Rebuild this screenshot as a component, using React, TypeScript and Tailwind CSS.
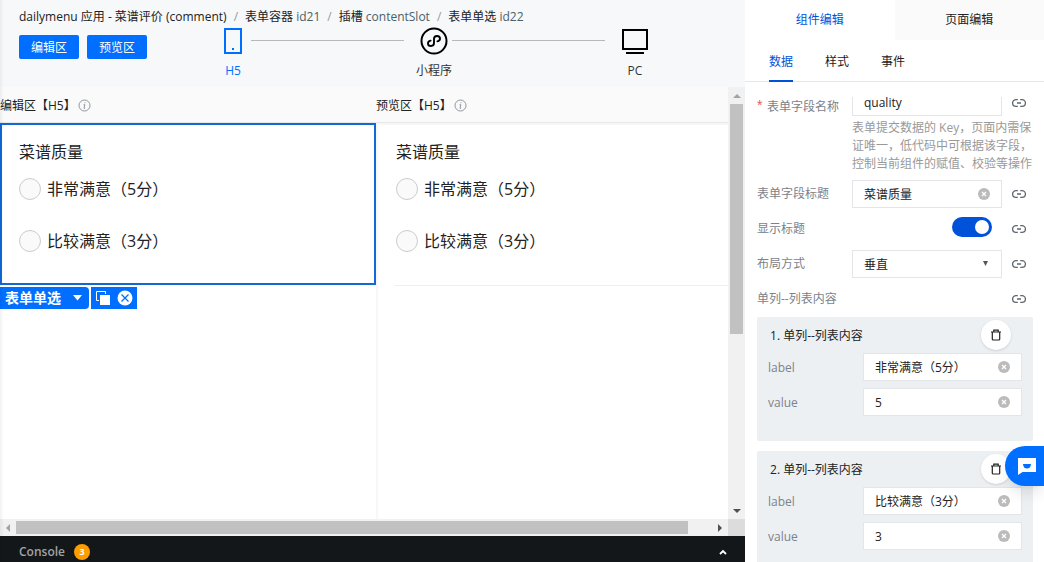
import { useState } from "react";
import type { ReactNode } from "react";

type Item = { label: string; value: string };

const crumbs = [
    { name: "表单容器", id: "id21" },
    { name: "插槽", id: "contentSlot" },
    { name: "表单单选", id: "id22" },
];

const options = ["非常满意（5分）", "比较满意（3分）"];

//icons

const PhoneIcon = () => (
    <svg width="20" height="28" viewBox="0 0 20 28" fill="none">
        <rect x="2" y="2" width="16" height="24" stroke="#006eff" strokeWidth="2" />
        <rect x="9" y="21" width="2" height="2" fill="#006eff" />
    </svg>
);

const MiniIcon = () => (
    <svg width="28" height="28" viewBox="0 0 28 28" fill="none" stroke="#000">
        <circle cx="14" cy="14" r="12.5" strokeWidth="2" />
        <path d="M10.6 13.6c-1.6.3-2.6 1.4-2.6 2.8 0 1.500 1.300 2.600 3 2.600s3-1.200 3-2.900v-4.200c0-1.700 1.300-2.900 3-2.900s3 1.100 3 2.600c0 1.400-1 2.500-2.600 2.800" strokeWidth="1.9" strokeLinecap="round" />
    </svg>
);

const PcIcon = () => (
    <svg width="28" height="28" viewBox="0 0 28 28" fill="none">
        <rect x="2" y="3" width="24" height="19" stroke="#000" strokeWidth="2" />
        <rect x="5" y="25" width="18" height="2" fill="#000" />
    </svg>
);

const InfoIcon = () => (
    <svg width="13" height="13" viewBox="0 0 13 13" fill="none" stroke="#8f959e">
        <circle cx="6.5" cy="6.5" r="5.5" />
        <path d="M5.6 5.6h1.2L6 9.3h1.1M7 3.4v.8" />
    </svg>
);

const LinkIcon = () => (
    <svg width="14" height="10" viewBox="0 0 14 10" fill="none" stroke="#5f6670" strokeWidth="1.3">
        <path d="M5.8 1.6H4a3.4 3.4 0 0 0 0 6.8h1.8M8.2 1.6H10a3.4 3.4 0 0 1 0 6.8H8.2M5 5h4" />
    </svg>
);

const TrashIcon = () => (
    <svg width="12" height="12" viewBox="0 0 12 12" fill="none" stroke="#222" strokeWidth="1.2">
        <path d="M1 3h10M3.8 3V1.1h4.4V3M2.3 3v7.2q0 .8.8.8h5.8q.8 0 .8-.8V3" />
    </svg>
);

const ClearIcon = () => (
    <svg width="12" height="12" viewBox="0 0 12 12">
        <circle cx="6" cy="6" r="6" fill="#bbb" />
        <path d="M4 4l4 4M8 4l-4 4" stroke="#fff" strokeWidth="1.3" />
    </svg>
);

const CopyIcon = () => (
    <svg width="14" height="14" viewBox="0 0 14 14" fill="none">
        <path d="M9.5 3V.5h-9v9H3" stroke="#fff" />
        <rect x="4" y="4" width="10" height="10" fill="#fff" />
    </svg>
);

const CloseIcon = () => (
    <svg width="16" height="16" viewBox="0 0 16 16">
        <circle cx="8" cy="8" r="7.5" fill="#fff" />
        <path d="M4.5 4.5l7 7M11.5 4.5l-7 7" stroke="#006eff" strokeWidth="1.2" />
    </svg>
);

const ChatIcon = () => (
    <svg width="18" height="17" viewBox="0 0 18 17">
        <path d="M0 0h18v14H4.5L0 17z" fill="#fff" />
        <path d="M5 6h8a4 4.6 0 0 1-8 0z" fill="#006eff" />
    </svg>
);

const Arrow = ({ d, color }: { d: string; color: string }) => (
    <svg width="8" height="8" viewBox="0 0 8 8">
        <path d={d} fill={color} />
    </svg>
);

//left side

const Step = ({ icon, text, active }: { icon: ReactNode; text: string; active?: boolean }) => (
    <button className="flex w-9 shrink-0 flex-col items-center">
        <span className="flex h-7 items-center justify-center">{icon}</span>
        <span className={`mt-[7px] whitespace-nowrap leading-[18px] ${active ? "text-[#006eff]" : "text-[#333]"}`}>{text}</span>
    </button>
);

const StepLine = () => <div className="mt-[13px] mr-3 h-px flex-1 bg-[#b5b8bc]" />;

const Header = () => (
    <header className="h-[87px] shrink-0 bg-[#f6f8fa] pl-[19px]">
        <nav className="flex h-[27px] items-center pt-[7px] whitespace-nowrap text-[#222]">
            <span>dailymenu 应用 - 菜谱评价 (comment)</span>
            {crumbs.map((c) => (
                <span key={c.id} className="flex">
                    <span className="mx-[7px] text-[#999]">/</span>
                    <a href="#" className="text-[#222]">
                        {c.name} <span className="text-[#4b5f66]">{c.id}</span>
                    </a>
                </span>
            ))}
        </nav>
        <div className="flex items-start pr-[92px]">
            <div className="mt-2 mr-[68px] flex gap-2 text-white">
                <button className="h-6 w-15 rounded-xs bg-[#006eff] pt-0.5">编辑区</button>
                <button className="h-6 w-15 rounded-xs bg-[#006eff] pt-0.5">预览区</button>
            </div>
            <div className="flex flex-1 items-start">
                <Step icon={<PhoneIcon />} text="H5" active />
                <StepLine />
                <Step icon={<MiniIcon />} text="小程序" />
                <StepLine />
                <Step icon={<PcIcon />} text="PC" />
            </div>
        </div>
    </header>
);

const PaneTitle = ({ text }: { text: string }) => (
    <div className="flex h-9 items-center gap-0.5 border-b border-[#e8e8e8] bg-[#fafafa] pt-0.5 text-[#222]">
        {text}
        <InfoIcon />
    </div>
);

const RadioForm = ({ name }: { name: string }) => (
    <fieldset className="pt-[15px] pb-[31px] pl-[17px] text-base text-[#222]">
        <legend className="float-left w-full leading-6">菜谱质量</legend>
        <div className="clear-both flex flex-col gap-[30px] pt-3.5">
            {options.map((o) => (
                <label key={o} className="flex h-[22px] items-center gap-1.5">
                    <input type="radio" name={name} className="size-[22px] appearance-none rounded-full border border-[#ccc] bg-[#fafafa] checked:border-[#006eff]" />
                    {o}
                </label>
            ))}
        </div>
    </fieldset>
);

const Canvas = () => (
    <div className="flex min-h-0 flex-1">
        <div className="grid min-w-0 flex-1 grid-cols-[376fr_352fr] bg-white">
            <section>
                <PaneTitle text="编辑区【H5】" />
                <div className="border-2 border-[#1169d8]">
                    <RadioForm name="edit" />
                </div>
                <div className="mt-0.5 flex gap-0.5 text-white">
                    <button className="flex h-[22px] items-center gap-3 rounded-r-sm bg-[#006eff] pr-[7px] pl-[5px] text-sm leading-[22px] font-bold">
                        表单单选
                        <svg width="9" height="6" viewBox="0 0 9 6">
                            <path d="M0 0h9L4.5 5.5z" fill="#fff" />
                        </svg>
                    </button>
                    <div className="flex h-[22px] items-center gap-[7px] bg-[#006eff] pr-1 pl-[5px]">
                        <button aria-label="复制"><CopyIcon /></button>
                        <button aria-label="删除"><CloseIcon /></button>
                    </div>
                </div>
            </section>
            <section className="overflow-hidden">
                <PaneTitle text="预览区【H5】" />
                <div className="h-full border-t-2 border-l-2 border-[#f7f7f7] pl-px">
                    <RadioForm name="preview" />
                    <div className="mt-0.5 ml-4 h-px bg-[#eee]" />
                </div>
            </section>
        </div>
        <div className="flex w-[17px] shrink-0 flex-col items-center bg-[#f1f1f1]">
            <div className="flex h-[17px] items-center"><Arrow d="M0 6l4-4 4 4z" color="#a3a3a3" /></div>
            <div className="h-[230px] w-[13px] bg-[#c1c1c1]" />
            <div className="mt-auto flex h-[17px] items-center"><Arrow d="M0 2l4 4 4-4z" color="#505050" /></div>
        </div>
    </div>
);

const BottomBar = () => (
    <>
        <div className="flex h-[17px] shrink-0 bg-[#f1f1f1]">
            <div className="flex w-4 items-center justify-center"><Arrow d="M6 0L2 4l4 4z" color="#a3a3a3" /></div>
            <div className="flex flex-1 items-center">
                <div className="h-[13px] w-[96.5%] bg-[#c1c1c1]" />
            </div>
            <div className="flex w-4 items-center justify-center"><Arrow d="M2 0l4 4-4 4z" color="#505050" /></div>
            <div className="w-[17px] bg-[#dcdcdc]" />
        </div>
        <footer className="flex h-[26px] shrink-0 items-center bg-[#14171a] pt-[5px] pr-[18px] pl-[19px]">
            <span className="font-semibold text-[#a0a3a6]">Console</span>
            <span className="ml-[9px] size-4 rounded-full bg-[#ff9c00] text-center text-[9px] leading-4 font-bold text-white">3</span>
            <button aria-label="展开" className="ml-auto">
                <svg width="8" height="6" viewBox="0 0 8 6" fill="none">
                    <path d="M1 5l3-3 3 3" stroke="#fff" strokeWidth="1.8" />
                </svg>
            </button>
        </footer>
    </>
);

//right side

const TextField = ({ id, value, onChange, clearable = true }: { id: string; value: string; onChange: (v: string) => void; clearable?: boolean }) => (
    <div className="flex h-7 min-w-0 flex-1 items-center border border-[#e3e5e8] bg-white px-[11px]">
        <input id={id} value={value} onChange={(e) => onChange(e.target.value)} className="w-full min-w-0 flex-1 pt-0.5 text-[#222] outline-none" />
        {clearable && (
            <button aria-label="清除" onClick={() => onChange("")}>
                <ClearIcon />
            </button>
        )}
    </div>
);

const Row = ({ id, label, children }: { id?: string; label: string; children?: ReactNode }) => (
    <div className="flex h-7 items-center">
        <label htmlFor={id} className="w-[95px] shrink-0 text-[#7d828a]">{label}</label>
        <div className="flex min-w-0 flex-1 justify-end pr-2.5">{children}</div>
        <button aria-label="绑定" className="mr-[7px]"><LinkIcon /></button>
    </div>
);

const ItemCard = ({ index, item, onChange }: { index: number; item: Item; onChange: (item: Item) => void }) => (
    <div className="rounded-xs bg-[#edf0f3] px-[11px] pb-[25px]">
        <div className="flex h-9 items-center justify-between pr-[11px] pl-0.5 text-[#222]">
            <span className="pt-0.5">{index}. 单列--列表内容</span>
            <button aria-label="删除" className="flex size-[30px] items-center justify-center rounded-full bg-white shadow-sm">
                <TrashIcon />
            </button>
        </div>
        <div className="flex flex-col gap-[7px]">
            {(["label", "value"] as const).map((k) => (
                <div key={k} className="flex items-center">
                    <label htmlFor={`${k}${index}`} className="w-[95px] shrink-0 pt-0.5 text-[#7d828a]">{k}</label>
                    <TextField id={`${k}${index}`} value={item[k]} onChange={(v) => onChange({ ...item, [k]: v })} />
                </div>
            ))}
        </div>
    </div>
);

const SidePanel = () => {
    const [name, setName] = useState("quality");
    const [title, setTitle] = useState("菜谱质量");
    const [items, setItems] = useState<Item[]>([
        { label: "非常满意（5分）", value: "5" },
        { label: "比较满意（3分）", value: "3" },
    ]);

    return (
        <aside className="flex w-[299px] shrink-0 flex-col bg-white">
            <div className="grid h-10 shrink-0 grid-cols-2">
                <button className="text-[#0052d9]">组件编辑</button>
                <button className="bg-[#fafafa] text-[#222]">页面编辑</button>
            </div>
            <div className="flex h-[42px] shrink-0 gap-8 border-b border-[#e5e7ea] px-6 text-[#222]">
                <button className="-mb-px border-b-2 border-[#0052d9] pt-1 text-[#0052d9]">数据</button>
                <button className="pt-0.5">样式</button>
                <button className="pt-0.5">事件</button>
            </div>
            <div className="mt-[15px] min-h-0 flex-1 overflow-hidden pr-[11px] pl-3">
                {/* scrolled down a little */}
                <div className="-mt-[9px] flex items-start">
                    <label htmlFor="name" className="flex w-[95px] shrink-0 pt-[9px] text-[#7d828a]">
                        <span className="w-2.5 text-[10px] leading-[14px] text-[#e54545]">*</span>
                        <span className="leading-5">表单字段名称</span>
                    </label>
                    <div className="min-w-0 flex-1">
                        <div className="flex">
                            <TextField id="name" value={name} onChange={setName} clearable={false} />
                            <button aria-label="绑定" className="mr-[7px] ml-2.5 pt-0.5"><LinkIcon /></button>
                        </div>
                        <p className="mt-[3px] leading-[18px] text-[#999]">表单提交数据的 Key，页面内需保证唯一，低代码中可根据该字段，控制当前组件的赋值、校验等操作</p>
                    </div>
                </div>
                <div className="mt-[7px] flex flex-col gap-[7px]">
                    <Row id="title" label="表单字段标题">
                        <TextField id="title" value={title} onChange={setTitle} />
                    </Row>
                    <Row id="show" label="显示标题">
                        <input
                            id="show"
                            type="checkbox"
                            role="switch"
                            defaultChecked
                            className="mr-2.5 mb-1 flex h-5 w-10 appearance-none items-center rounded-full bg-[#ccc] px-[3px] before:size-3.5 before:rounded-full before:bg-white checked:justify-end checked:bg-[#0052d9]"
                        />
                    </Row>
                    <Row id="layout" label="布局方式">
                        <div className="relative flex-1">
                            <select id="layout" className="block h-7 w-full appearance-none border border-[#e3e5e8] bg-white pt-0.5 pl-[11px] text-[#222]">
                                <option>垂直</option>
                                <option>水平</option>
                            </select>
                            <svg className="pointer-events-none absolute top-[11px] right-3.5" width="5" height="5" viewBox="0 0 6 6">
                                <path d="M0 0h6L3 6z" fill="#555" />
                            </svg>
                        </div>
                    </Row>
                    <Row label="单列--列表内容" />
                </div>
                <div className="mt-1 flex flex-col gap-2.5">
                    {items.map((item, i) => (
                        <ItemCard key={i} index={i + 1} item={item} onChange={(next) => setItems(items.map((old, j) => (j === i ? next : old)))} />
                    ))}
                </div>
            </div>
        </aside>
    );
};

export default function App() {
    return (
        <div className="flex h-screen overflow-hidden font-['Open_Sans','Noto_Sans_CJK_SC',sans-serif] text-xs">
            <main className="relative flex min-w-0 flex-1 flex-col">
                <Header />
                <Canvas />
                <BottomBar />
                <div className="pointer-events-none absolute inset-y-0 left-0 w-1 bg-linear-to-r from-black/5 to-transparent" />
            </main>
            <SidePanel />
            <button aria-label="客服" className="fixed right-0 bottom-19 flex h-10 w-[39px] items-center rounded-l-full bg-[#006eff] pl-[13px] shadow-lg">
                <ChatIcon />
            </button>
        </div>
    );
}
